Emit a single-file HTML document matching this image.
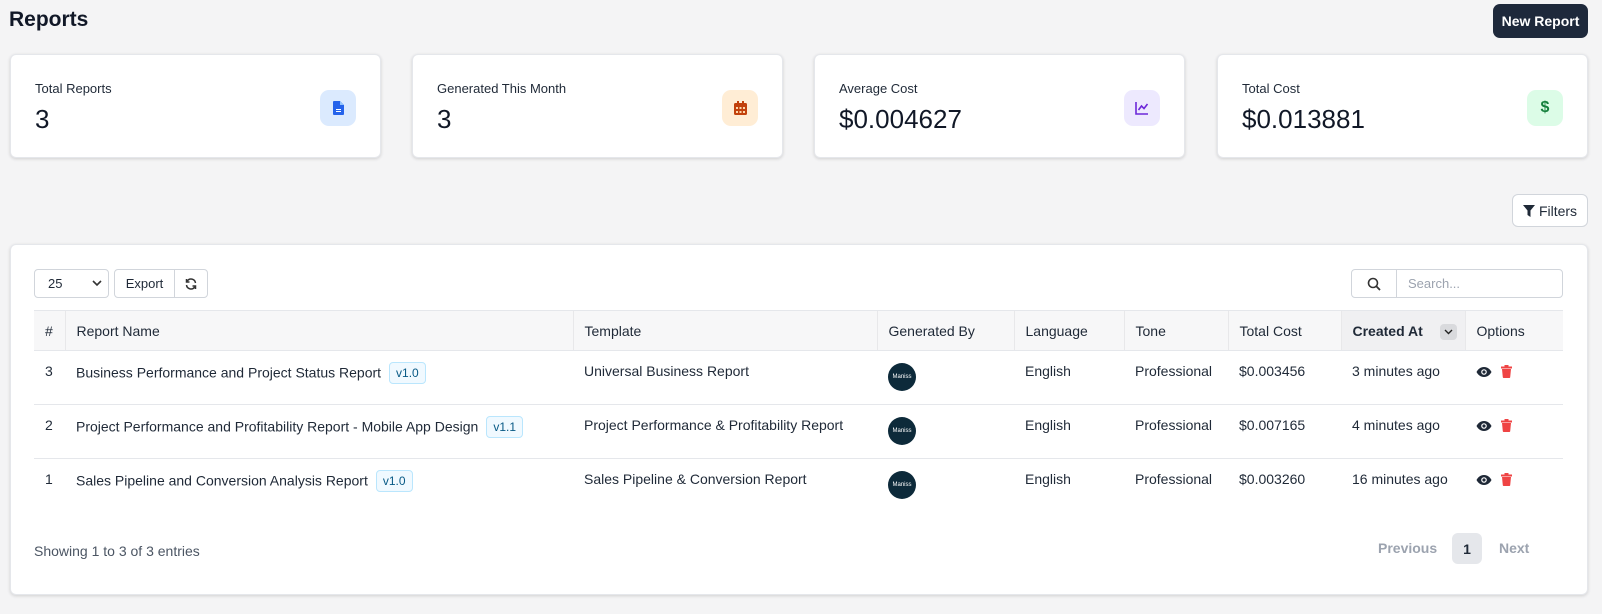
<!DOCTYPE html>
<html><head><meta charset="utf-8"><style>
*{box-sizing:border-box;margin:0;padding:0}
body{width:1602px;height:614px;background:#f4f4f5;font-family:"Liberation Sans",sans-serif;color:#1f2937;position:relative;overflow:hidden}
.abs{position:absolute}
h1{position:absolute;left:9px;top:8px;font-size:21px;font-weight:bold;color:#111827}
.btn-new{left:1493px;top:4px;width:95px;height:34px;background:#1e293b;color:#fff;border-radius:7px;font-size:14px;font-weight:bold;display:flex;align-items:center;justify-content:center}
.card{background:#fff;border-radius:6px;box-shadow:0 1px 3px rgba(0,0,0,.15);border:1px solid #e5e7eb}
.stat{top:54px;height:104px;width:371px}
.stat .l{position:absolute;left:24px;top:26px;font-size:13px;color:#1f2937}
.stat .v{position:absolute;left:24px;top:49px;font-size:26px;color:#111827}
.stat .ic{position:absolute;right:24px;top:35px;width:36px;height:36px;border-radius:9px;display:flex;align-items:center;justify-content:center}
.filters{left:1512px;top:194px;width:76px;height:33px;background:#fff;border:1px solid #d1d5db;border-radius:6px;font-size:14px;display:flex;align-items:center;justify-content:center;gap:4px;color:#1f2937}
.ctl{border:1px solid #d1d5db;border-radius:4px;background:#fff;font-size:13px;display:flex;align-items:center}
table{position:absolute;left:34px;top:310px;width:1529px;border-collapse:collapse;font-size:14px}
th{background:#f7f7f8;text-align:left;font-weight:normal;height:40px;padding:0 11px;border-top:1px solid #e5e7eb;border-bottom:1px solid #e5e7eb;border-left:1px solid #e8e8ea;color:#1f2937}
th:first-child{border-left:none}
td{vertical-align:top;padding:12px 11px 0;height:54px;border-bottom:1px solid #e5e7eb;color:#1f2937}
tr:last-child td{border-bottom:none}
.badge{display:inline-block;margin-left:8px;border:1px solid #bae6fd;background:#f0f9ff;color:#075985;border-radius:4px;font-size:12px;padding:3px 6px;vertical-align:middle;position:relative;top:-1px}
.av{width:28px;height:28px;border-radius:50%;background:#0d2a3a;color:#fff;font-size:6px;display:flex;align-items:center;justify-content:center}
.opt{display:flex;gap:9px;align-items:center;padding-top:2px}
</style></head><body>
<h1>Reports</h1>
<div class="abs btn-new">New Report</div>

<div class="abs card stat" style="left:10px"><div class="l">Total Reports</div><div class="v">3</div>
<div class="ic" style="background:#dbeafe"><svg width="11" height="14" viewBox="0 0 11 14"><path d="M1 0h6l4 4v9a1 1 0 0 1-1 1H1a1 1 0 0 1-1-1V1a1 1 0 0 1 1-1z" fill="#2563eb"/><path d="M7 0v4h4" fill="#93c5fd"/><rect x="3" y="8" width="5" height="1" fill="#fff"/><rect x="3" y="10" width="5" height="1" fill="#fff"/></svg></div></div>
<div class="abs card stat" style="left:412px"><div class="l">Generated This Month</div><div class="v">3</div>
<div class="ic" style="background:#ffedd5"><svg width="13" height="14" viewBox="0 0 13 14"><rect x="0" y="2" width="13" height="12" rx="1.5" fill="#c2410c"/><rect x="3" y="0" width="2" height="3" fill="#c2410c"/><rect x="8" y="0" width="2" height="3" fill="#c2410c"/><g fill="#fed7aa"><rect x="2" y="6" width="2" height="2"/><rect x="5.5" y="6" width="2" height="2"/><rect x="9" y="6" width="2" height="2"/><rect x="2" y="10" width="2" height="2"/><rect x="5.5" y="10" width="2" height="2"/><rect x="9" y="10" width="2" height="2"/></g></svg></div></div>
<div class="abs card stat" style="left:814px"><div class="l">Average Cost</div><div class="v">$0.004627</div>
<div class="ic" style="background:#ede9fe"><svg width="14" height="14" viewBox="0 0 14 14"><path d="M1 1v12h12M3.5 9l3-4 2.5 2.5L12.5 3" fill="none" stroke="#6d28d9" stroke-width="1.6"/></svg></div></div>
<div class="abs card stat" style="left:1217px"><div class="l">Total Cost</div><div class="v">$0.013881</div>
<div class="ic" style="background:#dcfce7"><span style="color:#15803d;font-weight:bold;font-size:16px">$</span></div></div>

<div class="abs filters"><svg width="12" height="12" viewBox="0 0 12 12"><path d="M0 0h12L7.5 5.5V12L4.5 10V5.5z" fill="#1f2937"/></svg>Filters</div>

<div class="abs card" style="left:10px;top:244px;width:1578px;height:351px"></div>
<div class="abs ctl" style="left:34px;top:269px;width:75px;height:29px;padding-left:13px;justify-content:space-between;padding-right:6px"><span>25</span><svg width="10" height="7" viewBox="0 0 10 7"><path d="M1 1l4 4 4-4" fill="none" stroke="#333" stroke-width="1.6"/></svg></div>
<div class="abs ctl" style="left:114px;top:269px;width:94px;height:29px"><span style="width:60px;text-align:center;border-right:1px solid #d1d5db;line-height:27px">Export</span><span style="flex:1;display:flex;justify-content:center"><svg width="12" height="12" viewBox="0 0 12 12"><path d="M10.5 5A4.5 4.5 0 0 0 2.2 3.2M1.5 7a4.5 4.5 0 0 0 8.3 1.8" fill="none" stroke="#333" stroke-width="1.5"/><path d="M1.5 1v3h3M10.5 11V8h-3" fill="none" stroke="#333" stroke-width="1.5"/></svg></span></div>
<div class="abs ctl" style="left:1351px;top:269px;width:212px;height:29px"><span style="width:45px;display:flex;justify-content:center;border-right:1px solid #d1d5db;height:27px;align-items:center"><svg width="14" height="14" viewBox="0 0 14 14"><circle cx="6" cy="6" r="4.5" fill="none" stroke="#333" stroke-width="1.6"/><path d="M9.3 9.3L13 13" stroke="#333" stroke-width="1.8"/></svg></span><span style="padding-left:11px;color:#9ca3af">Search...</span></div>

<table>
<colgroup><col style="width:31px"><col style="width:508px"><col style="width:304px"><col style="width:137px"><col style="width:110px"><col style="width:104px"><col style="width:113px"><col style="width:124px"><col></colgroup>
<tr><th>#</th><th>Report Name</th><th>Template</th><th>Generated By</th><th>Language</th><th>Tone</th><th>Total Cost</th><th style="background:#f0f0f2;font-weight:bold;position:relative">Created At<span style="position:absolute;right:8px;top:13px;width:17px;height:16px;background:#d9dadd;border-radius:4px;display:flex;align-items:center;justify-content:center"><svg width="9" height="6" viewBox="0 0 9 6"><path d="M1 1l3.5 3.5L8 1" fill="none" stroke="#222" stroke-width="1.4"/></svg></span></th><th>Options</th></tr>
<tr><td>3</td><td>Business Performance and Project Status Report<span class="badge">v1.0</span></td><td>Universal Business Report</td><td><div class="av">Maniss</div></td><td>English</td><td>Professional</td><td>$0.003456</td><td>3 minutes ago</td><td><div class="opt"><svg width="16" height="12" viewBox="0 0 16 12"><path d="M8 1C4 1 1.5 4 .5 6c1 2 3.5 5 7.5 5s6.5-3 7.5-5C14.5 4 12 1 8 1z" fill="#1f2937"/><circle cx="8" cy="6" r="2.8" fill="#fff"/><circle cx="8" cy="6" r="1.6" fill="#1f2937"/></svg><svg width="11" height="13" viewBox="0 0 11 13"><rect x="0" y="1.5" width="11" height="2" fill="#ef4444"/><rect x="3.5" y="0" width="4" height="2" fill="#ef4444"/><path d="M1 4h9l-.8 8.2a1 1 0 0 1-1 .8H2.8a1 1 0 0 1-1-.8z" fill="#ef4444"/></svg></div></td></tr>
<tr><td>2</td><td>Project Performance and Profitability Report - Mobile App Design<span class="badge">v1.1</span></td><td>Project Performance &amp; Profitability Report</td><td><div class="av">Maniss</div></td><td>English</td><td>Professional</td><td>$0.007165</td><td>4 minutes ago</td><td><div class="opt"><svg width="16" height="12" viewBox="0 0 16 12"><path d="M8 1C4 1 1.5 4 .5 6c1 2 3.5 5 7.5 5s6.5-3 7.5-5C14.5 4 12 1 8 1z" fill="#1f2937"/><circle cx="8" cy="6" r="2.8" fill="#fff"/><circle cx="8" cy="6" r="1.6" fill="#1f2937"/></svg><svg width="11" height="13" viewBox="0 0 11 13"><rect x="0" y="1.5" width="11" height="2" fill="#ef4444"/><rect x="3.5" y="0" width="4" height="2" fill="#ef4444"/><path d="M1 4h9l-.8 8.2a1 1 0 0 1-1 .8H2.8a1 1 0 0 1-1-.8z" fill="#ef4444"/></svg></div></td></tr>
<tr><td>1</td><td>Sales Pipeline and Conversion Analysis Report<span class="badge">v1.0</span></td><td>Sales Pipeline &amp; Conversion Report</td><td><div class="av">Maniss</div></td><td>English</td><td>Professional</td><td>$0.003260</td><td>16 minutes ago</td><td><div class="opt"><svg width="16" height="12" viewBox="0 0 16 12"><path d="M8 1C4 1 1.5 4 .5 6c1 2 3.5 5 7.5 5s6.5-3 7.5-5C14.5 4 12 1 8 1z" fill="#1f2937"/><circle cx="8" cy="6" r="2.8" fill="#fff"/><circle cx="8" cy="6" r="1.6" fill="#1f2937"/></svg><svg width="11" height="13" viewBox="0 0 11 13"><rect x="0" y="1.5" width="11" height="2" fill="#ef4444"/><rect x="3.5" y="0" width="4" height="2" fill="#ef4444"/><path d="M1 4h9l-.8 8.2a1 1 0 0 1-1 .8H2.8a1 1 0 0 1-1-.8z" fill="#ef4444"/></svg></div></td></tr>
</table>

<div class="abs" style="left:34px;top:543px;font-size:14px;color:#4b5563">Showing 1 to 3 of 3 entries</div>
<div class="abs" style="left:1378px;top:540px;font-size:14px;color:#9ca3af;font-weight:bold">Previous</div>
<div class="abs" style="left:1452px;top:533px;width:30px;height:31px;background:#e5e7eb;border-radius:6px;font-size:14px;font-weight:bold;display:flex;align-items:center;justify-content:center">1</div>
<div class="abs" style="left:1499px;top:540px;font-size:14px;color:#9ca3af;font-weight:bold">Next</div>
</body></html>
